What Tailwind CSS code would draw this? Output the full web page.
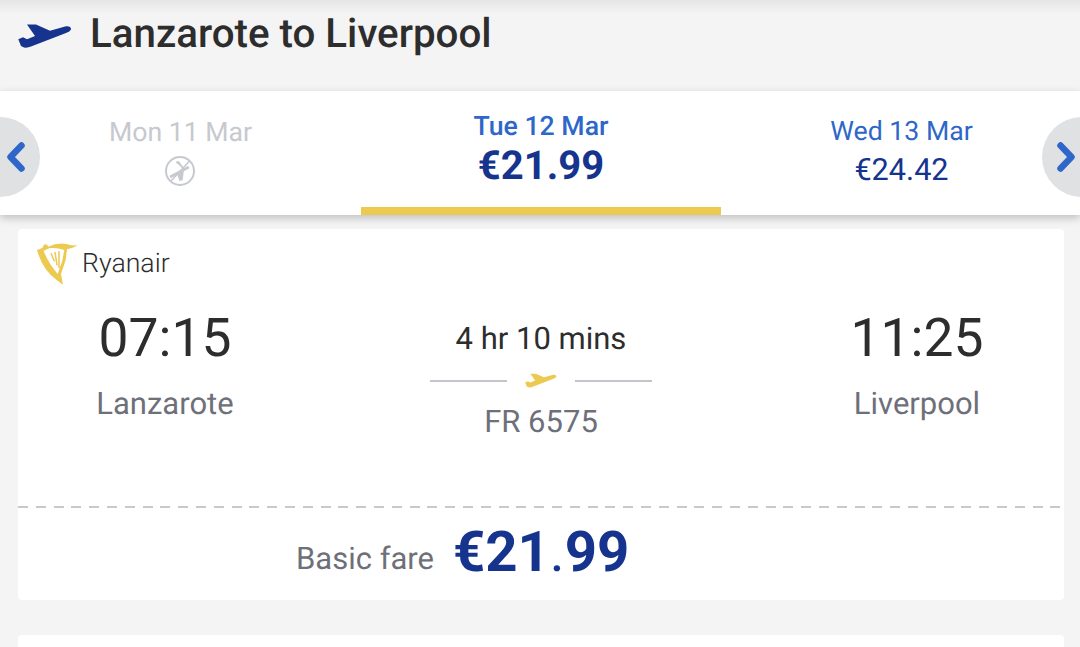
<!DOCTYPE html>
<html lang="en">
<head>
    <meta charset="UTF-8">
    <title>Lanzarote to Liverpool</title>
    <script src="https://cdn.jsdelivr.net/npm/@tailwindcss/browser@4"></script>
</head>
<body class="bg-[#f4f4f4] font-['Roboto',sans-serif] [text-rendering:geometricPrecision] h-[647px] overflow-hidden relative">

    <!-- Title -->
    <header class="h-[91px] flex items-start pt-[11px] pl-[18px] bg-gradient-to-b from-[#e6e6e6] to-[#f4f4f4] to-[14px]">
        <svg class="w-[54px] h-[24px] mt-[13px]" viewBox="18 24 54 24" fill="#16338e">
            <path d="M18.3 39.3 L23 37.2 L27 39.3 L35 36 L27 24.4 L36 24.4 L50 30.7 L66 26.3 Q71 25.8 71 29.5 Q70 31.5 66 33 L31 46.6 Q28 48 24 47.6 L21 46 Z"/>
        </svg>
        <h1 class="ml-[18px] text-[40.3px] leading-[46px] font-medium text-[#2d2d2d]">Lanzarote to Liverpool</h1>
    </header>

    <!-- Date tabs -->
    <nav class="relative h-[124px] bg-white grid grid-cols-[361px_360px_361px] shadow-[0_3px_8px_rgba(0,0,0,0.22)] z-10 overflow-x-clip">
        <div class="flex flex-col items-center pt-[26px]">
            <span class="text-[26.67px] leading-[30px] text-[#c6c9ce]">Mon 11 Mar</span>
            <svg class="w-[30px] h-[30px] mt-[9px] -ml-[1px]" viewBox="0 0 30 30" fill="none" stroke="#c6c9ce">
                <circle cx="15" cy="15" r="14" stroke-width="2"/>
                <path d="M6 20.5 L23 11.5" stroke-width="2.6" stroke-linecap="round"/>
                <path d="M11 6.5 L13.5 6 L18.5 13 M12.5 17 L15 24 L17 23.5 L18 15" stroke-width="1.6" fill="#c6c9ce"/>
                <path d="M25 4.5 L5.5 25.5" stroke-width="1.6"/>
            </svg>
        </div>
        <div class="flex flex-col items-center border-b-[8px] border-[#ecc94f] pt-[18px]">
            <span class="text-[26.67px] leading-[35px] font-medium text-[#2e67c9]">Tue 12 Mar</span>
            <span class="text-[40px] leading-[44px] font-bold text-[#16338e]">€21.99</span>
        </div>
        <div class="flex flex-col items-center pt-[25px]">
            <span class="text-[26.67px] leading-[30px] text-[#2e67c9]">Wed 13 Mar</span>
            <span class="text-[30.67px] leading-[36px] mt-[7px] text-[#16338e]">€24.42</span>
        </div>

        <div class="absolute left-[-40px] top-[26px] w-[80px] h-[80px] rounded-full bg-[#e0e1e3] flex items-center justify-end pr-[15px]">
            <svg class="w-[18px] h-[30px]" viewBox="0 0 18 30" fill="none" stroke="#2e67c9" stroke-width="6.5" stroke-linecap="round" stroke-linejoin="round"><path d="M14.5 3.5 L3.5 15 L14.5 26.5"/></svg>
        </div>
        <div class="absolute left-[1042px] top-[26px] w-[80px] h-[80px] rounded-full bg-[#e0e1e3] flex items-center justify-start pl-[15px]">
            <svg class="w-[18px] h-[30px]" viewBox="0 0 18 30" fill="none" stroke="#2e67c9" stroke-width="6.5" stroke-linecap="round" stroke-linejoin="round"><path d="M3.5 3.5 L14.5 15 L3.5 26.5"/></svg>
        </div>
    </nav>

    <!-- Flight card -->
    <section class="mr-[16px] ml-[18px] mt-[14px] h-[371px] bg-white rounded-[4px] flex flex-col">
        <div class="h-[277px]">
            <div class="flex items-center pt-[9px] pl-[15px]">
                <svg class="w-[52px] h-[50px]" viewBox="0 0 156 150">
                    <path d="M12 36 L28 30 L32 22 Q36 16 42 20 L46 26 Q75 12 100 18 Q118 24 136 22 Q120 30 102 34 L98 66 L84 108 L90 140 L70 125 Q28 95 12 36 Z M32 38 Q44 72 74 108 L88 68 L94 36 Q70 28 48 31 Z" fill="#ecc94f" fill-rule="evenodd"/>
                    <path d="M54 46 L64 70 M66 42 L72 82 M78 40 L78 90" stroke="#ecc94f" stroke-width="4.5" fill="none"/>
                </svg>
                <span class="-ml-[3px] text-[26.67px] leading-[42px] font-light text-[#2d2d2d]">Ryanair</span>
            </div>
            <div class="flex mt-[19px]">
                <div class="w-[294px] flex flex-col items-center">
                    <span class="text-[53.33px] leading-[64px] text-[#2d2d2d]">07:15</span>
                    <span class="text-[31px] leading-[36px] mt-[15px] text-[#6e7079]">Lanzarote</span>
                </div>
                <div class="flex-1 flex flex-col items-center pt-[14px]">
                    <span class="text-[31px] leading-[36px] text-[#2d2d2d]">4 hr 10 mins</span>
                    <div class="flex items-center mt-[14px] h-[20px]">
                        <div class="w-[77px] h-[2px] bg-[#c3c5ca]"></div>
                        <svg class="w-[32px] h-[15px] mx-[18px] -mt-[2px]" viewBox="18 24 54 24" fill="#ecc94f">
                            <path d="M18.3 39.3 L23 37.2 L27 39.3 L35 36 L27 24.4 L36 24.4 L50 30.7 L66 26.3 Q71 25.8 71 29.5 Q70 31.5 66 33 L31 46.6 Q28 48 24 47.6 L21 46 Z"/>
                        </svg>
                        <div class="w-[77px] h-[2px] bg-[#c3c5ca]"></div>
                    </div>
                    <span class="text-[31px] leading-[36px] mt-[13px] text-[#6e7079]">FR 6575</span>
                </div>
                <div class="w-[294px] flex flex-col items-center">
                    <span class="text-[53.33px] leading-[64px] text-[#2d2d2d]">11:25</span>
                    <span class="text-[31px] leading-[36px] mt-[15px] text-[#6e7079]">Liverpool</span>
                </div>
            </div>
        </div>
        <div class="h-[2px] bg-[repeating-linear-gradient(90deg,#c6c9ce_0_10px,transparent_10px_17.8px)]"></div>
        <div class="flex-1 flex items-center pl-[278px]">
            <span class="text-[31px] text-[#6e7079] mt-[10px]">Basic fare</span>
            <span class="ml-[19px] text-[56.3px] leading-[66px] font-bold text-[#16338e] mt-[-4px]">€21<span class="font-normal">.</span>99</span>
        </div>
    </section>

    <!-- Next card -->
    <section class="ml-[18px] mr-[16px] mt-[35px] h-[12px] bg-white rounded-t-[4px]"></section>

</body>
</html>
